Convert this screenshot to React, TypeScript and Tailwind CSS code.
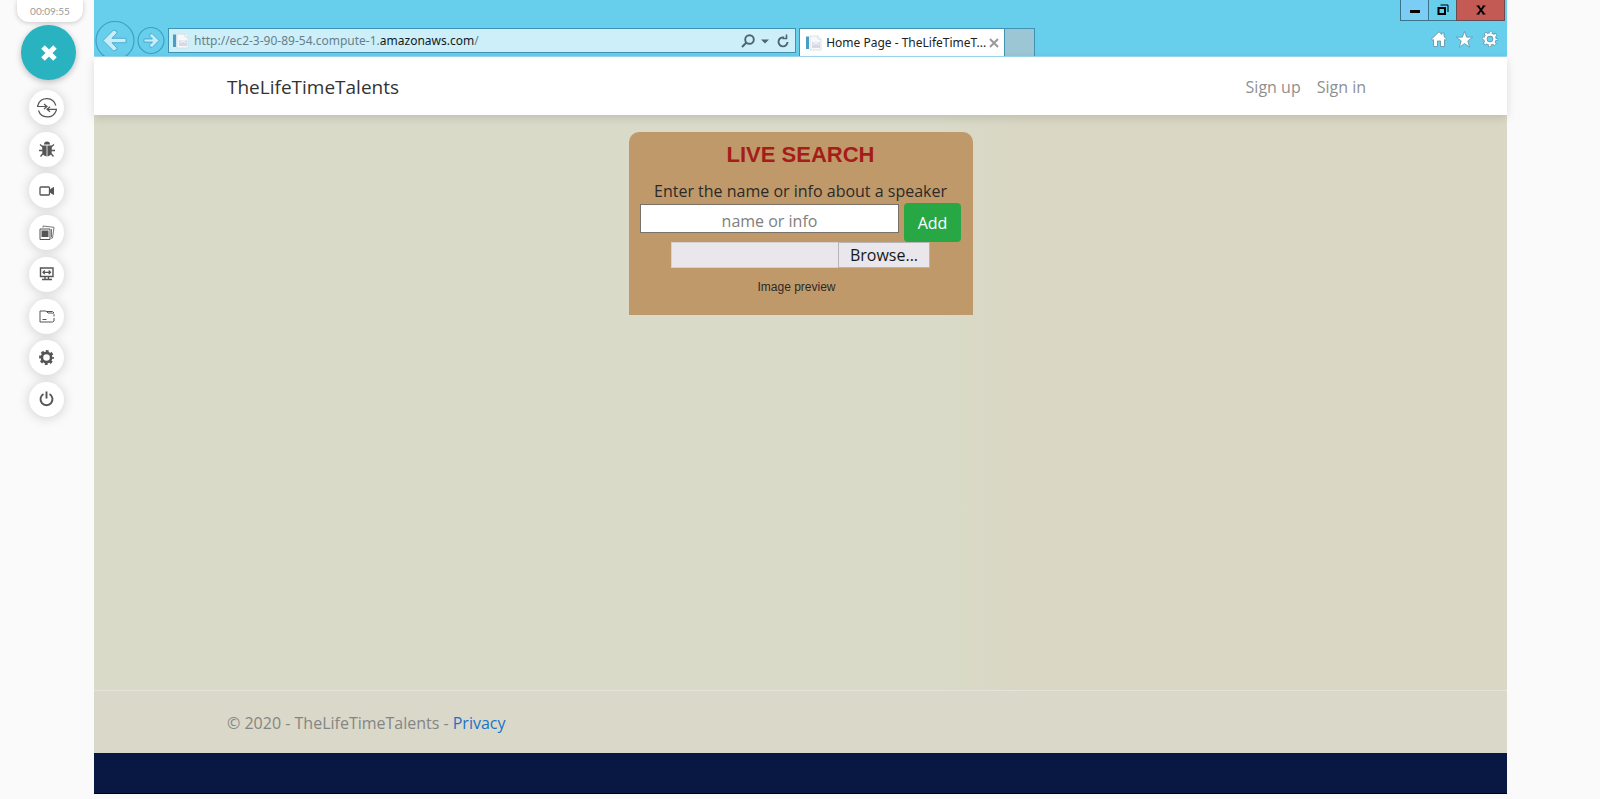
import type { ReactNode } from "react";

function ToolButton({ label, children }: { label: string; children: ReactNode }) {
  return (
    <button
      type="button"
      aria-label={label}
      className="flex size-[35px] items-center justify-center rounded-full bg-white text-[#555555] shadow-[0_1px_12px_rgba(0,0,0,0.18)]"
    >
      {children}
    </button>
  );
}

function SessionTools() {
  return (
    <aside className="flex w-[94px] shrink-0 flex-col items-start">
      <div className="ml-[17px] flex h-[22px] w-[66px] items-center justify-center rounded-b-xl bg-white font-[Lato,sans-serif] text-[10px] text-[#999999] shadow-[0_1px_5px_rgba(0,0,0,0.2)]">
        00:09:55
      </div>
      <button
        type="button"
        aria-label="Close tools"
        className="mt-[3px] ml-[21px] flex size-[55px] items-center justify-center rounded-full bg-[#29b3c1] shadow-[0_2px_6px_rgba(0,0,0,0.25)]"
      >
        <svg viewBox="0 0 16 16" className="size-4" stroke="#fff" strokeWidth="5">
          <path d="M2 2l12 12M14 2L2 14" />
        </svg>
      </button>
      <div className="mt-[10px] ml-[29px] flex h-[327px] flex-col justify-between">
        <ToolButton label="Transfer">
          <svg viewBox="0 0 20 20" className="size-5" fill="none" stroke="currentColor" strokeWidth="1.2">
            <path d="M1 7A9.300 9.300 0 0 1 18.800 7.500M0 8.500h9.500M7 6l3 2.500-3 2.500M19 13A9.300 9.300 0 0 1 1.500 12.500M20 11.300h-9.500M13 8.800l-3 2.500 3 2.500M19.500 11.300L19 13M.500 8.500L1 7" />
          </svg>
        </ToolButton>
        <ToolButton label="Report a bug">
          <svg viewBox="0 0 16 16" className="size-4" fill="none" stroke="currentColor">
            <path d="M5 3.500a3 3 0 0 1 6 0z" fill="currentColor" stroke="none" />
            <path d="M3.200 4.600h4.400v10.900C4.500 15 3.200 13 3.200 10zM12.800 4.600H8.400v10.900c3.100-.5 4.400-2.500 4.400-5.500z" fill="currentColor" stroke="none" />
            <path d="M0 9.500h3.500M12.500 9.500H16M1 3.500l3 2.500M15 3.500L12 6M1.500 15.500L4.500 12M14.500 15.500L11.500 12" strokeWidth="1.300" />
          </svg>
        </ToolButton>
        <ToolButton label="Record video">
          <svg viewBox="0 0 16 10" className="h-2.5 w-4" fill="none" stroke="currentColor">
            <rect x="1" y="1" width="9.500" height="8" rx="1" strokeWidth="1.300" />
            <path d="M11.500 3.500L14.500 1.500v7l-3-2z" fill="currentColor" />
          </svg>
        </ToolButton>
        <ToolButton label="Gallery">
          <svg viewBox="0 0 16 16" className="size-4" fill="none" stroke="currentColor">
            <path d="M1 4h10v10.500H1z" />
            <path d="M2.500 5.500h7v6.500h-7z" fill="currentColor" stroke="none" />
            <path d="M4 2.500V1l11 1.300L13.500 13l-1.500.300M12.500 4v8" strokeWidth=".8" />
          </svg>
        </ToolButton>
        <ToolButton label="Screen size">
          <svg viewBox="0 0 16 16" className="size-4" fill="none" stroke="currentColor">
            <path d="M1.500 2h12.500v8.500H1.500z" strokeWidth="1.400" />
            <path d="M4 6.300h7.500M5.800 4.500L4 6.300l1.800 1.800M9.700 4.500l1.800 1.800-1.800 1.800M6 11v2M9.500 11v2M3 13.500h10" strokeWidth="1.300" />
          </svg>
        </ToolButton>
        <ToolButton label="Files">
          <svg viewBox="0 0 16 16" className="size-4" fill="none" stroke="currentColor">
            <path d="M1 14V3h6l2 2h4.500L15 6.500v2M15 10v3l-1.500 1H1M8 3.500h5.500L15 5M3.500 11.500h4" strokeWidth="1" />
          </svg>
        </ToolButton>
        <ToolButton label="Settings">
          <svg viewBox="0 0 16 16" className="size-4" fill="none" stroke="currentColor">
            <circle cx="7.500" cy="7.500" r="4.600" strokeWidth="2.600" />
            <circle cx="7.500" cy="7.500" r="6.200" strokeWidth="2.400" strokeDasharray="2.800 2.070" strokeDashoffset="1.400" />
          </svg>
        </ToolButton>
        <ToolButton label="Power">
          <svg viewBox="0 0 16 16" className="size-4" fill="none" stroke="currentColor" strokeWidth="1.900">
            <path d="M4.500 3a6 6 0 1 0 6 0M7.500 .5v7" />
          </svg>
        </ToolButton>
      </div>
    </aside>
  );
}

function PageIcon() {
  return (
    <svg viewBox="0 0 16 16" className="size-4 shrink-0">
      <path d="M4 1h8l3 3v11H4z" fill="#f6f8fa" stroke="#d5dbe3" strokeWidth=".8" />
      <path d="M12 1v3h3" fill="#fff" stroke="#c8cfd8" strokeWidth=".6" />
      <path d="M6 7.500h8V13H6z" fill="#d6d9e5" />
      <path d="M7 10c2-2 4-2 6 0" stroke="#fff" fill="none" />
      <path d="M0 1.500h3v12.500H0z" fill="#4a9cc4" />
    </svg>
  );
}

function WindowControls() {
  return (
    <div className="flex h-[21px] justify-end pr-[2px] text-black">
      <button type="button" aria-label="Minimize" className="flex w-[29px] items-center justify-center border border-t-0 border-[#3b7389] bg-[#7ccdf5]">
        <svg viewBox="0 0 12 12" className="size-3">
          <path d="M1 6h10v3H1z" />
        </svg>
      </button>
      <button type="button" aria-label="Restore" className="flex w-[27px] items-center justify-center border-b border-[#3b7389]">
        <svg viewBox="0 0 12 12" className="size-3" fill="none" stroke="#000">
          <path d="M1.500 4h6.500v6H1.500z" strokeWidth="2" />
          <path d="M3.500 1h7.500v7" strokeWidth="1" />
        </svg>
      </button>
      <button type="button" aria-label="Close" className="flex w-[49px] items-center justify-center border border-t-0 border-[#6b4a50] bg-[#c45a54]">
        <svg viewBox="0 0 10 10" className="size-2.5" stroke="#000">
          <path d="M2 1l6 8M8 1L2 9" strokeWidth="2" />
          <path d="M.5 1h3M6.500 1h3M.5 9h3M6.500 9h3" strokeWidth="1" />
        </svg>
      </button>
    </div>
  );
}

function BrowserBar() {
  return (
    <div className="h-[57px] overflow-hidden border-b border-[#9bdcf0] bg-[#67ceeb]">
      <WindowControls />
      <div className="flex h-[36px] items-stretch">
        <button type="button" aria-label="Back" className="ml-px shrink-0 self-start">
          <svg viewBox="0 0 40 40" className="size-10" fill="none">
            <circle cx="20" cy="19.500" r="19" stroke="#3fa0c4" strokeWidth="1.200" />
            <path d="M8 19.500L18.500 9l3.500 1.500v1.500L17 17.300h14v4.400H17l5 5.300v1.500L18.500 30z" fill="#c6eefa" stroke="#3fa0c4" strokeWidth=".8" />
          </svg>
        </button>
        <button type="button" aria-label="Forward" className="mt-[6px] ml-[2px] shrink-0 self-start">
          <svg viewBox="0 0 28 28" className="size-7" fill="none">
            <circle cx="14" cy="13.500" r="13" stroke="#3fa0c4" strokeWidth="1.200" />
            <path d="M22 13.500L15 6.500l-2.500 1.200v1.200L15.500 12H7v3h8.500l-3 3.100v1.200L15 20.500z" fill="#c6eefa" stroke="#3fa0c4" strokeWidth=".8" />
          </svg>
        </button>
        <div className="mt-[7px] ml-[3px] flex h-[25px] min-w-0 flex-[4] items-center border border-[#3f92b3] bg-[#cdeff9] pr-[5px] pl-1 text-[#4c6570]">
          <PageIcon />
          <div className="ml-[5px] min-w-0 flex-1 truncate font-['Noto_Sans',sans-serif] text-[12px] text-[#66808b]">
            http://ec2-3-90-89-54.compute-1.<span className="text-[#101c22]">amazonaws.com</span>/
          </div>
          <button type="button" aria-label="Search">
            <svg viewBox="0 0 14 14" className="size-3.5" fill="none" stroke="currentColor" strokeWidth="1.900">
              <circle cx="8.500" cy="5.500" r="4.300" />
              <path d="M5.500 8.500L1 13" />
            </svg>
          </button>
          <button type="button" aria-label="Show address list" className="ml-[6px]">
            <svg viewBox="0 0 8 8" className="size-2" fill="currentColor">
              <path d="M0 2.500h8L4 6.500z" />
            </svg>
          </button>
          <button type="button" aria-label="Refresh" className="ml-[7px]">
            <svg viewBox="0 0 14 14" className="size-3.5" fill="none" stroke="currentColor" strokeWidth="1.900">
              <path d="M8 3.500A4.500 4.500 0 1 0 11.500 8" />
              <path d="M6.500 4.500h4V.500" strokeWidth="1.600" />
            </svg>
          </button>
        </div>
        <div className="mt-[7px] ml-[3px] flex w-[206px] shrink-0 items-center border border-b-0 border-[#3f92b3] bg-white pr-[5px] pl-[6px]">
          <PageIcon />
          <span className="ml-1 min-w-0 flex-1 font-['Noto_Sans',sans-serif] text-[12px] whitespace-nowrap text-[#222222]">
            Home Page - TheLifeTimeT...
          </span>
          <button type="button" aria-label="Close tab">
            <svg viewBox="0 0 10 10" className="size-2.5" stroke="#999999" strokeWidth="2">
              <path d="M1 1l8 8M9 1L1 9" />
            </svg>
          </button>
        </div>
        <button type="button" aria-label="New tab" className="mt-[7px] w-[30px] shrink-0 border-t border-r border-[#3f92b3] bg-[#9cc6d4]" />
        <div className="flex flex-[3] items-start justify-end gap-[9px] pt-[10px] pr-[9px]">
          <button type="button" aria-label="Home">
            <svg viewBox="0 0 16 16" className="size-4" fill="#fff" stroke="#5b8fa3" strokeWidth=".8">
              <path d="M8 .800L.500 8l1.300 1.200.700-.600V15.500h4V10h3v5.500h4V8.600l.7.600L15.500 8 13 5.600V2h-2.300v1.400z" />
            </svg>
          </button>
          <button type="button" aria-label="Favorites">
            <svg viewBox="0 0 16 16" className="size-[17px]" fill="#fff" stroke="#5b8fa3" strokeWidth=".7">
              <path d="M8 .5l2 5.300h5.600l-4.500 3.500 1.700 5.900L8 11.800l-4.800 3.400 1.700-5.900L.400 5.800H6z" />
            </svg>
          </button>
          <button type="button" aria-label="Tools">
            <svg viewBox="0 0 16 16" className="size-4" fill="none">
              <circle cx="8" cy="8" r="6.500" stroke="#5b8fa3" strokeWidth="3" strokeDasharray="3 2.105" strokeDashoffset="1.500" />
              <circle cx="8" cy="8" r="4.500" stroke="#5b8fa3" strokeWidth="3.800" />
              <circle cx="8" cy="8" r="6.300" stroke="#fff" strokeWidth="2.200" strokeDasharray="2 2.948" strokeDashoffset="1" />
              <circle cx="8" cy="8" r="4.500" stroke="#fff" strokeWidth="2.500" />
            </svg>
          </button>
        </div>
      </div>
    </div>
  );
}

function SearchCard() {
  return (
    <form className="mx-auto flex h-[183px] w-[344px] flex-col items-center rounded-t-[10px] bg-[#c0996a] pt-[8px]">
      <h1 className="font-['Liberation_Sans',sans-serif] text-[22px] leading-[30px] font-bold text-[#a51d18]">
        LIVE SEARCH
      </h1>
      <label htmlFor="speaker" className="mt-[9px] text-[16px] leading-6 text-[#2b2a28]">
        Enter the name or info about a speaker
      </label>
      <div className="flex items-start gap-[5px]">
        <input
          id="speaker"
          type="text"
          placeholder="name or info"
          className="mt-px h-[29px] w-[259px] border border-[#77726a] bg-white pt-1 text-center text-[16px] text-[#222222] placeholder:text-[#808080]"
        />
        <button type="button" className="h-[39px] w-[57px] rounded-[4px] bg-[#28a745] text-[16px] text-white">
          Add
        </button>
      </div>
      <div className="flex h-[26px] w-[259px] bg-[#e9e7ec]">
        <input type="text" readOnly aria-label="Selected image" className="min-w-0 flex-1 border border-r-0 border-[#d6d0d0]" />
        <button type="button" className="w-[92px] border border-[#b9b4b6] text-[16px] leading-6 text-[#161616]">
          Browse...
        </button>
      </div>
      <p className="mt-[10px] pr-2 font-['Liberation_Sans',sans-serif] text-[12px] leading-[18px] text-[#2b2a28]">
        Image preview
      </p>
    </form>
  );
}

export default function App() {
  return (
    <div className="flex min-h-screen bg-[#fafafa] pr-[93px] font-['Open_Sans',sans-serif]">
      <SessionTools />
      <div className="mb-[5px] flex min-w-0 flex-1 flex-col bg-[#dadac9]">
        <BrowserBar />
        <header className="z-10 bg-white shadow-[0_3px_9px_rgba(0,0,0,0.12)]">
          <nav className="mx-auto flex h-[58px] max-w-[1147px] items-center justify-between pt-[2px]">
            <a href="#home" className="text-[19px] text-[#333333]">
              TheLifeTimeTalents
            </a>
            <div className="flex text-[16px] text-[#8f8f8f]">
              <a href="#sign-up" className="px-2">
                Sign up
              </a>
              <a href="#sign-in" className="px-2">
                Sign in
              </a>
            </div>
          </nav>
        </header>
        <main className="flex-1 bg-linear-to-r from-[#d9dac8] from-60% to-[#dad7c4] to-66% pt-[17px]">
          <SearchCard />
        </main>
        <footer className="border-t border-[#e2e2d8] bg-[#dad8c8]">
          <p className="mx-auto flex h-[62px] max-w-[1147px] items-center gap-1 pt-[2px] text-[16px] text-[#858585]">
            <span>© 2020 - TheLifeTimeTalents -</span>
            <a href="#privacy" className="text-[#1a72c8]">
              Privacy
            </a>
          </p>
        </footer>
        <div className="h-[41px] border-b border-black bg-[#091843]" />
      </div>
    </div>
  );
}
